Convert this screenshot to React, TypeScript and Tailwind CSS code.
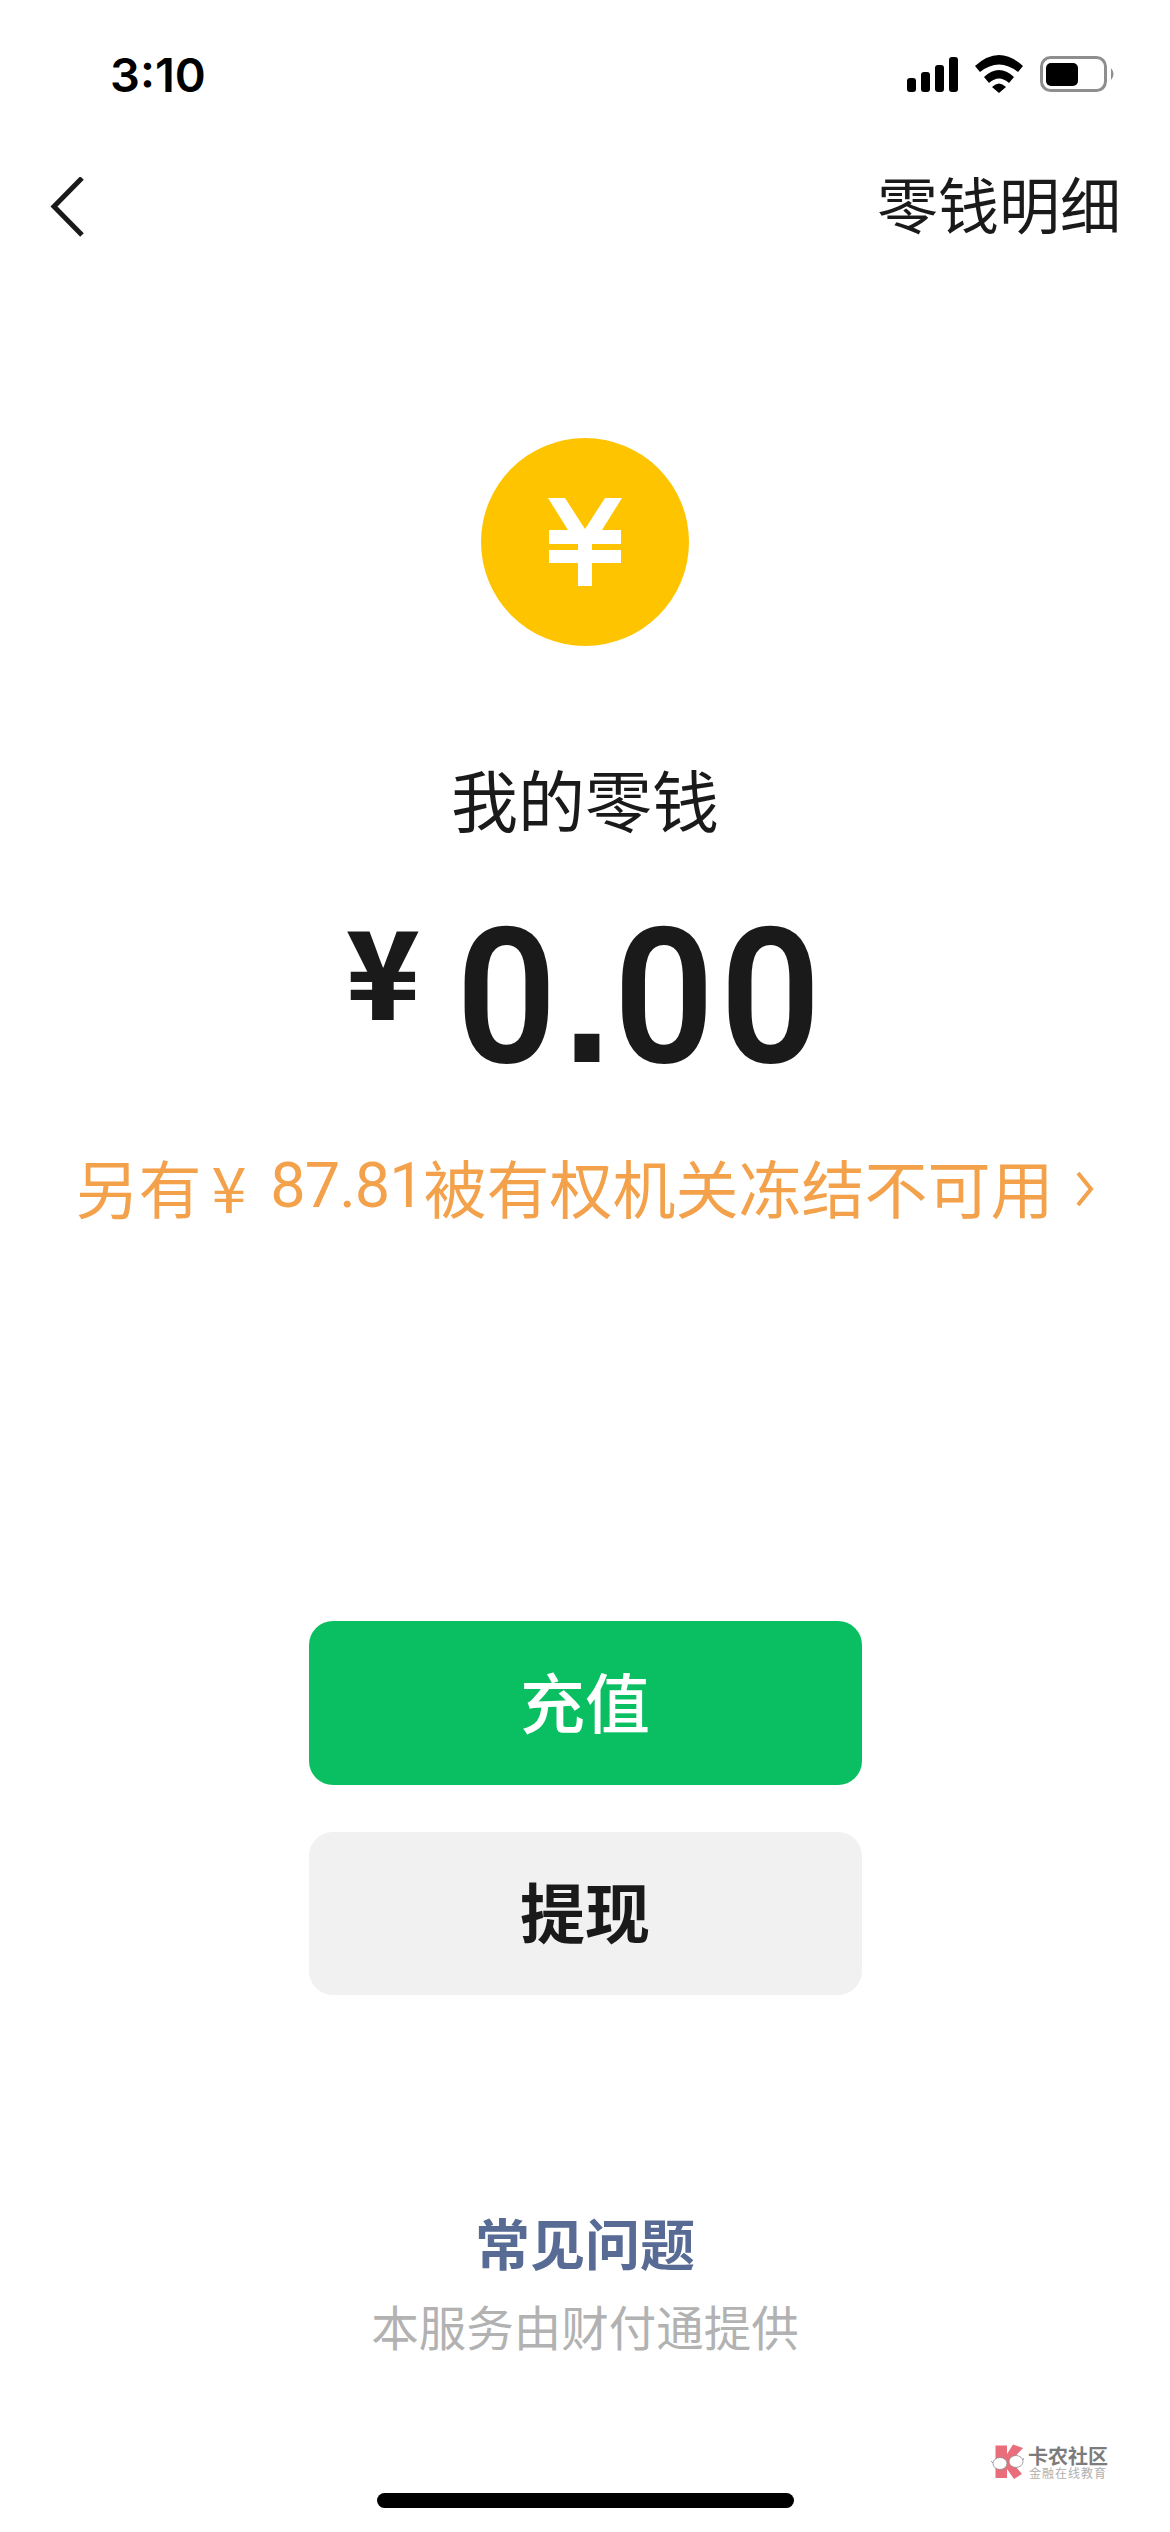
const cjk = "font-['Noto_Sans_CJK_SC','Noto_Sans',sans-serif]";

function StatusIcons() {
  return (
    <svg width="220" height="50" viewBox="0 0 220 50" className="block">
      <rect x="7" y="28" width="9" height="14" rx="3" fill="#000" />
      <rect x="21" y="22" width="9" height="20" rx="3" fill="#000" />
      <rect x="35" y="15" width="9" height="27" rx="3" fill="#000" />
      <rect x="49" y="7" width="9" height="35" rx="3" fill="#000" />
      <path d="M75 16 Q99 -6 123 16 L118 22 Q99 7 80 22 Z" fill="#000" />
      <path d="M84 27 Q99 13 114 27 L109 33 Q99 24 89 33 Z" fill="#000" />
      <path d="M92 37 Q99 30 106 37 L99 43 Z" fill="#000" />
      <rect x="141.5" y="7.5" width="64" height="33" rx="9" fill="none" stroke="#8e8e8e" strokeWidth="3" />
      <rect x="146" y="13" width="32" height="23" rx="5" fill="#000" />
      <path d="M211 18 Q216 24 211 30 Z" fill="#8e8e8e" />
    </svg>
  );
}

function CoinMark() {
  return (
    <svg width="74" height="88" viewBox="0 0 74 88" className="block">
      <path d="M0 0 H17 L37 31 L57 0 H74 L54 32 H73 V46 H44 V52 H73 V65 H44 V88 H30 V65 H1 V52 H30 V46 H1 V32 H20 Z" fill="#fff" />
    </svg>
  );
}

function Watermark() {
  return (
    <div className="absolute right-[62px] bottom-[52px] flex items-center gap-[4px]">
      <svg width="33" height="36" viewBox="0 0 33 36" className="block">
        <path d="M4.5 1.5 H16 V10 L22 0.5 L32 4 L20 17 L31 30 L23 35 L16 25 V34 H4.5 Z" fill="#ea6d7c" />
        <ellipse cx="9" cy="19.5" rx="7" ry="6" fill="#fff" stroke="#8a8a8a" strokeWidth="0.8" />
        <ellipse cx="25" cy="17.5" rx="7" ry="6" fill="#fff" stroke="#8a8a8a" strokeWidth="0.8" />
        <path d="M2 19 L0 17 M32 16 L33 14" stroke="#8a8a8a" strokeWidth="0.8" />
      </svg>
      <div className="flex flex-col items-center">
        <div className="text-[20px] leading-[21px] font-bold text-[#7c7c7c]">卡农社区</div>
        <div className="text-[12px] leading-[13px] text-[#b0b0b0] tracking-[1px]">金融在线教育</div>
      </div>
    </div>
  );
}

export default function App() {
  return (
    <div className={`w-[1170px] h-[2532px] bg-white flex flex-col items-center overflow-hidden relative ${cjk}`}>
      <div className="w-full h-[100px] pt-[50px] pl-[110px] pr-[50px] flex justify-between items-start">
        <span className="mt-[1px] text-[47px] leading-[48px] font-semibold text-black font-['Inter',sans-serif]">3:10</span>
        <StatusIcons />
      </div>
      <div className="w-full h-[130px] pt-[68px] pl-[49px] pr-[49px] flex justify-between items-start">
        <svg width="36" height="60" viewBox="0 0 36 60" fill="none" className="block mt-[9px]">
          <path d="M33 1 L5 29.5 L33 58" stroke="#1a1a1a" strokeWidth="5" />
        </svg>
        <span className="text-[61px] leading-[70px] text-[#1a1a1a]">零钱明细</span>
      </div>
      <div className="mt-[208px] w-[208px] h-[208px] rounded-full bg-[#fec400] flex items-center justify-center">
        <CoinMark />
      </div>
      <div className="mt-[112px] text-[67px] leading-[80px] text-[#1a1a1a]">我的零钱</div>
      <div className="mt-[63px] ml-[10px] flex items-start text-[#1a1a1a]">
        <span className="mt-[5px] mr-[36px] text-[122px] leading-[122px] font-black">¥</span>
        <div className="flex items-baseline h-[190px] mr-[-20px] origin-left scale-x-[0.93] text-[190px] leading-[190px] font-semibold font-['Roboto',sans-serif] tracking-[6px]">
          <span>0</span>
          <span className="font-bold font-['Liberation_Sans',sans-serif] tracking-[2px]">.</span>
          <span>00</span>
        </div>
      </div>
      <div className="mt-[55px] flex items-center text-[63px] leading-[80px] text-[#f3a14b]">
        <span>另有</span>
        <span className="ml-[10px]">¥</span>
        <span className="ml-[24px] font-['Roboto',sans-serif] tracking-[-1px]">87.81</span>
        <span>被有权机关冻结不可用</span>
        <svg width="20" height="38" viewBox="0 0 20 38" fill="none" className="ml-[21px] mt-[6px]">
          <path d="M3 3 L16 19 L3 35" stroke="#f3a14b" strokeWidth="4" />
        </svg>
      </div>
      <button className="mt-[395px] w-[553px] h-[164px] pb-[5px] rounded-[24px] bg-[#0abf62] text-white text-[65px] font-medium">充值</button>
      <button className="mt-[47px] w-[553px] h-[163px] pb-[5px] rounded-[24px] bg-[#f1f1f1] text-[#1a1a1a] text-[65px] font-bold">提现</button>
      <div className="mt-[211px] text-[#576b95] text-[55px] leading-[70px] font-bold">常见问题</div>
      <div className="mt-[20px] text-[#b2b2b2] text-[47.5px] leading-[60px]">本服务由财付通提供</div>
      <div className="absolute left-[377px] bottom-[24px] w-[417px] h-[15px] rounded-full bg-black" />
      <Watermark />
    </div>
  );
}
